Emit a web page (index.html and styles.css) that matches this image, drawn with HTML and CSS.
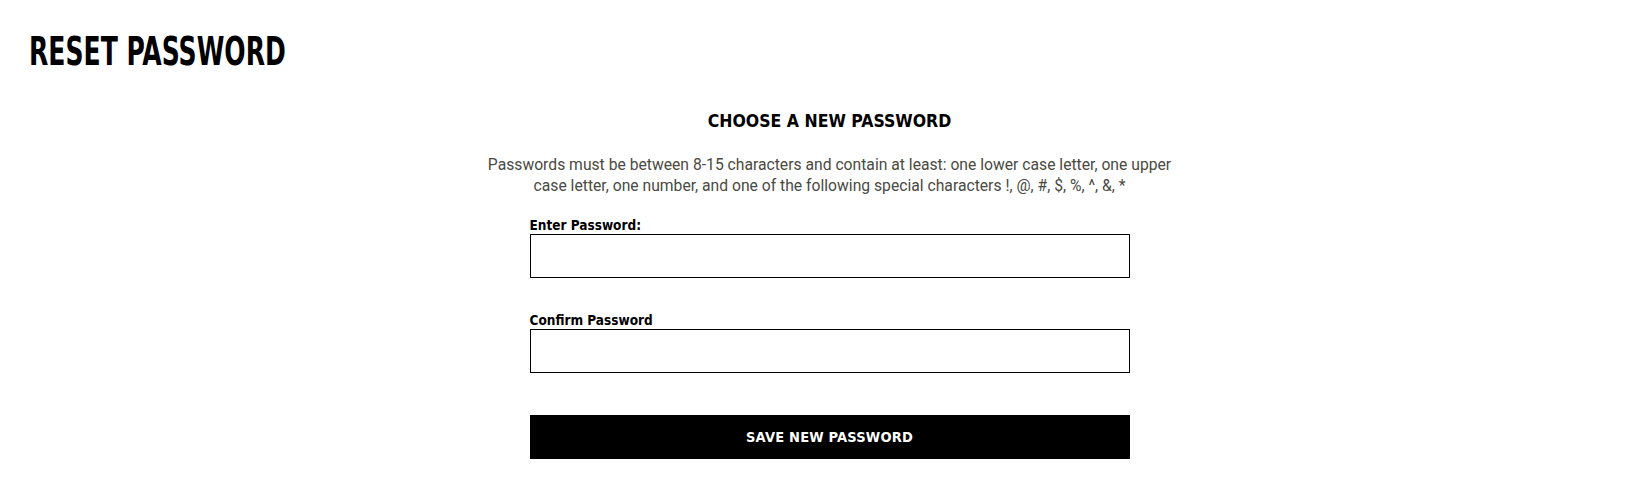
FILE: index.html
```html
<!DOCTYPE html>
<html lang="en">
<head>
<meta charset="utf-8">
<title>Reset Password</title>
<link rel="stylesheet" href="styles.css">
</head>
<body>
<main class="page">
  <h1 class="page-title">RESET PASSWORD</h1>
  <section class="reset">
    <h2 class="reset-title">CHOOSE A NEW PASSWORD</h2>
    <p class="reset-rules">Passwords must be between 8-15 characters and contain at least: one lower case letter, one upper case letter, one number, and one of the following special characters !, @, #, $, %, ^, &amp;, *</p>
    <form class="reset-form">
      <label class="field">
        <span class="field-label">Enter Password:</span>
        <input class="field-input" type="password">
      </label>
      <label class="field">
        <span class="field-label">Confirm Password</span>
        <input class="field-input" type="password">
      </label>
      <button class="save-btn" type="button">SAVE NEW PASSWORD</button>
    </form>
  </section>
</main>
</body>
</html>
```
FILE: styles.css
```css
* { box-sizing: border-box; }
body {
  margin: 0;
  background: #fff;
  color: #000;
  font-family: "DejaVu Sans Condensed", "DejaVu Sans", sans-serif;
}
.page {
  padding: 30px 0 0 14px;
}
.page-title {
  margin: 0 0 0 15px;
  font-family: "DejaVu Sans Condensed", sans-serif;
  font-weight: 700;
  font-size: 39px;
  line-height: 44px;
  letter-spacing: 0;
  transform: scaleX(0.715);
  transform-origin: left center;
  white-space: nowrap;
}
.reset {
  display: flex;
  flex-direction: column;
  align-items: center;
}
.reset-title {
  margin: 35px 0 0;
  font-family: "DejaVu Sans Condensed", sans-serif;
  font-weight: 700;
  font-size: 17.5px;
  line-height: 24px;
  letter-spacing: 0;
}
.reset-rules {
  margin: 21px 0 0;
  width: 712px;
  text-align: center;
  font-family: "Roboto", sans-serif;
  font-weight: 400;
  font-size: 15.7px;
  line-height: 21px;
  color: #4a4a42;
}
.reset-form {
  width: 600px;
  margin-top: 21px;
  display: flex;
  flex-direction: column;
}
.field {
  display: flex;
  flex-direction: column;
  margin-bottom: 34px;
}
.field-label {
  font-family: "DejaVu Sans Condensed", sans-serif;
  font-weight: 700;
  font-size: 13.5px;
  line-height: 17px;
}
.field-input {
  height: 44px;
  border: 1px solid #000;
  border-radius: 0;
  padding: 0 10px;
  font-size: 16px;
  background: #fff;
}
.save-btn {
  margin-top: 8px;
  height: 44px;
  border: 0;
  background: #000;
  color: #fff;
  font-family: "DejaVu Sans Condensed", sans-serif;
  font-weight: 700;
  font-size: 14.5px;
  letter-spacing: 0.2px;
}
```
